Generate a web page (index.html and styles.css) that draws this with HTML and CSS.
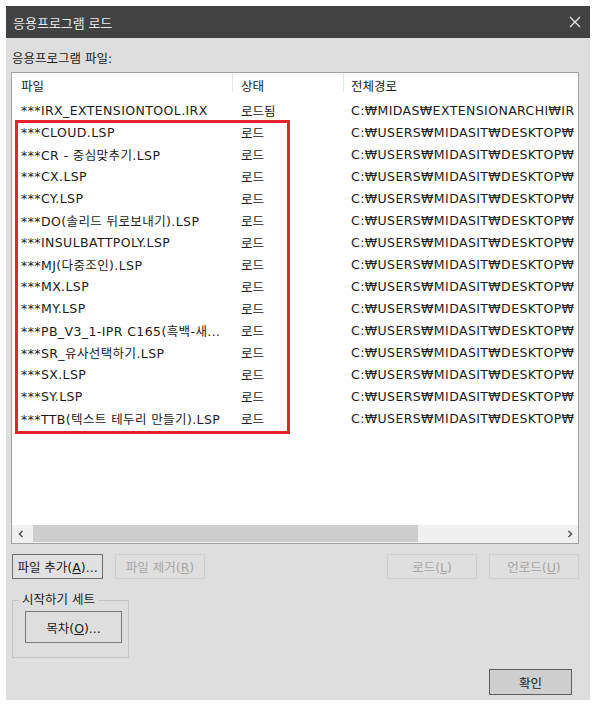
FILE: index.html
```html
<!DOCTYPE html>
<html lang="ko">
<head>
    <meta charset="UTF-8">
    <title>응용프로그램 로드</title>
    <link rel="stylesheet" href="styles.css">
</head>
<body>
    <div class="dialog">
        <div class="titlebar">
            <span class="title">응용프로그램 로드</span>
            <svg class="close" width="12" height="12" viewBox="0 0 12 12">
                <path d="M1 1 L11 11 M11 1 L1 11" stroke="#e6e6e6" stroke-width="1.3" fill="none"/>
            </svg>
        </div>

        <div class="content">
            <div class="label">응용프로그램 파일:</div>

            <div class="listbox">
                <div class="list-head">
                    <div class="col c1">파일</div>
                    <div class="col c2">상태</div>
                    <div class="col c3">전체경로</div>
                </div>
                <div class="list-rows">
                    <div class="row"><div class="col c1">***IRX_EXTENSIONTOOL.IRX</div><div class="col c2">로드됨</div><div class="col c3">C:₩MIDAS₩EXTENSIONARCHI₩IR</div></div>
                    <div class="row"><div class="col c1">***CLOUD.LSP</div><div class="col c2">로드</div><div class="col c3">C:₩USERS₩MIDASIT₩DESKTOP₩</div></div>
                    <div class="row"><div class="col c1">***CR - 중심맞추기.LSP</div><div class="col c2">로드</div><div class="col c3">C:₩USERS₩MIDASIT₩DESKTOP₩</div></div>
                    <div class="row"><div class="col c1">***CX.LSP</div><div class="col c2">로드</div><div class="col c3">C:₩USERS₩MIDASIT₩DESKTOP₩</div></div>
                    <div class="row"><div class="col c1">***CY.LSP</div><div class="col c2">로드</div><div class="col c3">C:₩USERS₩MIDASIT₩DESKTOP₩</div></div>
                    <div class="row"><div class="col c1">***DO(솔리드 뒤로보내기).LSP</div><div class="col c2">로드</div><div class="col c3">C:₩USERS₩MIDASIT₩DESKTOP₩</div></div>
                    <div class="row"><div class="col c1">***INSULBATTPOLY.LSP</div><div class="col c2">로드</div><div class="col c3">C:₩USERS₩MIDASIT₩DESKTOP₩</div></div>
                    <div class="row"><div class="col c1">***MJ(다중조인).LSP</div><div class="col c2">로드</div><div class="col c3">C:₩USERS₩MIDASIT₩DESKTOP₩</div></div>
                    <div class="row"><div class="col c1">***MX.LSP</div><div class="col c2">로드</div><div class="col c3">C:₩USERS₩MIDASIT₩DESKTOP₩</div></div>
                    <div class="row"><div class="col c1">***MY.LSP</div><div class="col c2">로드</div><div class="col c3">C:₩USERS₩MIDASIT₩DESKTOP₩</div></div>
                    <div class="row"><div class="col c1">***PB_V3_1-IPR C165(흑백-새...</div><div class="col c2">로드</div><div class="col c3">C:₩USERS₩MIDASIT₩DESKTOP₩</div></div>
                    <div class="row"><div class="col c1">***SR_유사선택하기.LSP</div><div class="col c2">로드</div><div class="col c3">C:₩USERS₩MIDASIT₩DESKTOP₩</div></div>
                    <div class="row"><div class="col c1">***SX.LSP</div><div class="col c2">로드</div><div class="col c3">C:₩USERS₩MIDASIT₩DESKTOP₩</div></div>
                    <div class="row"><div class="col c1">***SY.LSP</div><div class="col c2">로드</div><div class="col c3">C:₩USERS₩MIDASIT₩DESKTOP₩</div></div>
                    <div class="row"><div class="col c1">***TTB(텍스트 테두리 만들기).LSP</div><div class="col c2">로드</div><div class="col c3">C:₩USERS₩MIDASIT₩DESKTOP₩</div></div>

                    <!-- red mark drawn over the lisp rows -->
                    <div class="highlight"></div>
                </div>
                <div class="hscroll">
                    <div class="arrow">
                        <svg width="8" height="8" viewBox="0 0 8 8"><path d="M5.5 1 L2.5 4 L5.5 7" stroke="#555" stroke-width="1.6" fill="none"/></svg>
                    </div>
                    <div class="track"><div class="thumb"></div></div>
                    <div class="arrow">
                        <svg width="8" height="8" viewBox="0 0 8 8"><path d="M2.5 1 L5.5 4 L2.5 7" stroke="#555" stroke-width="1.6" fill="none"/></svg>
                    </div>
                </div>
            </div>

            <div class="btn-row">
                <div class="btn-group">
                    <button class="btn focused">파일 추가(<u>A</u>)...</button>
                    <button class="btn" disabled>파일 제거(<u>R</u>)</button>
                </div>
                <div class="btn-group">
                    <button class="btn" disabled>로드(<u>L</u>)</button>
                    <button class="btn" disabled>언로드(<u>U</u>)</button>
                </div>
            </div>

            <fieldset class="groupbox">
                <legend>시작하기 세트</legend>
                <button class="btn toc">목차(<u>O</u>)...</button>
            </fieldset>

            <div class="ok-row">
                <button class="btn ok">확인</button>
            </div>
        </div>
    </div>
</body>
</html>
```

FILE: styles.css
```css
body {
    margin: 0;
    background: #ffffff;
    font-family: "DejaVu Sans", "Noto Sans CJK KR", sans-serif;
    font-size: 12.5px;
    color: #1b1b1b;
}
.dialog {
    margin: 6px 0 0 6px;
    width: 584px;
    height: 694px;
    background: #dedede;
    display: flex;
    flex-direction: column;
}
.titlebar {
    height: 32px;
    background: #424242;
    display: flex;
    align-items: center;
    justify-content: space-between;
    padding: 0 9px 0 7px;
}
.title {
    color: #e8e8e8;
    font-family: "Noto Sans CJK KR", sans-serif;
    font-size: 13px;
}
.content {
    padding: 0 11px 0 5px;
}
.label {
    margin-top: 13px;
    line-height: 16px;
    height: 16px;
    margin-bottom: 5px;
    padding-left: 1px;
}
.listbox {
    height: 472px;
    box-sizing: border-box;
    border: 1px solid #a2a2a2;
    background: #ffffff;
    display: flex;
    flex-direction: column;
    overflow: hidden;
}
.list-head {
    height: 26px;
    display: flex;
    align-items: center;
    flex-shrink: 0;
}
.list-head .col {
    position: relative;
    height: 26px;
    line-height: 28px;
}
.list-head .c1::after,
.list-head .c2::after {
    content: "";
    position: absolute;
    top: 0;
    right: 0;
    width: 1px;
    height: 19px;
    background: #e5e5e5;
}
.list-rows {
    position: relative;
    flex: 1;
}
.row {
    height: 22px;
    display: flex;
    align-items: center;
    letter-spacing: 0.4px;
}
.col {
    white-space: nowrap;
    overflow: hidden;
    box-sizing: border-box;
}
.c1 {
    width: 221px;
    padding-left: 9px;
    flex-shrink: 0;
}
.c2 {
    width: 111px;
    padding-left: 8px;
    flex-shrink: 0;
    letter-spacing: 0;
}
.c3 {
    flex: 1;
    padding-left: 7px;
}
.highlight {
    position: absolute;
    top: 21px;
    left: 3px;
    width: 275px;
    height: 314px;
    box-sizing: border-box;
    border: 3px solid #e8212b;
}
.hscroll {
    height: 18px;
    display: flex;
    background: #f0f0f0;
    flex-shrink: 0;
}
.arrow {
    width: 17px;
    display: flex;
    align-items: center;
    justify-content: center;
}
.track {
    flex: 1;
    padding: 0 4px;
}
.thumb {
    width: 385px;
    height: 17px;
    background: #cdcdcd;
}
.btn-row {
    display: flex;
    justify-content: space-between;
    margin-top: 10px;
    padding-left: 1px;
}
.btn-group {
    display: flex;
    gap: 12px;
}
.btn {
    font: inherit;
    height: 25px;
    width: 90px;
    padding: 0;
    background: #e1e1e1;
    border: 1px solid #adadad;
    color: #1b1b1b;
}
.btn.focused {
    width: 91px;
    border-color: #6e6e6e;
}
.btn:disabled {
    background: #dfdfdf;
    border-color: #d0d0d0;
    color: #a6a6a6;
}
.groupbox {
    margin: 13px 0 0 1px;
    width: 117px;
    box-sizing: border-box;
    border: 1px solid #c4c4c4;
    padding: 3px 0 14px 0;
}
.groupbox legend {
    padding: 0 3px;
    margin-left: 6px;
    line-height: 16px;
}
.toc {
    margin-left: 12px;
    width: 97px;
    height: 32px;
    border-color: #7a7a7a;
    background: #dedede;
}
.ok-row {
    display: flex;
    justify-content: flex-end;
    margin-top: 11px;
    padding-right: 7px;
}
.ok {
    width: 83px;
    height: 26px;
    background: #cfcfcf;
    border-color: #5c5c5c;
}
```
